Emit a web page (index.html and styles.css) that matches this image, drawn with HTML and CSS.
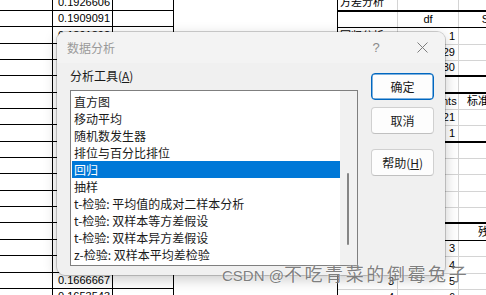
FILE: index.html
```html
<!DOCTYPE html>
<html lang="zh-CN">
<head>
<meta charset="utf-8">
<title>数据分析</title>
<link rel="stylesheet" href="styles.css">
</head>
<body>
<div class="screen">
  <div class="sheet">
    <div class="ltable">
      <div class="row"><div class="cell"></div><div class="cell num">0.1926606</div><div class="cell"></div></div>
      <div class="row"><div class="cell"></div><div class="cell num">0.1909091</div><div class="cell"></div></div>
      <div class="row"><div class="cell"></div><div class="cell num">0.1891892</div><div class="cell"></div></div>
      <div class="row"><div class="cell"></div><div class="cell num">0.1875</div><div class="cell"></div></div>
      <div class="row"><div class="cell"></div><div class="cell num">0.1858407</div><div class="cell"></div></div>
      <div class="row"><div class="cell"></div><div class="cell num">0.1842105</div><div class="cell"></div></div>
      <div class="row"><div class="cell"></div><div class="cell num">0.1826087</div><div class="cell"></div></div>
      <div class="row"><div class="cell"></div><div class="cell num">0.1810345</div><div class="cell"></div></div>
      <div class="row"><div class="cell"></div><div class="cell num">0.1794872</div><div class="cell"></div></div>
      <div class="row"><div class="cell"></div><div class="cell num">0.1779661</div><div class="cell"></div></div>
      <div class="row"><div class="cell"></div><div class="cell num">0.1764706</div><div class="cell"></div></div>
      <div class="row"><div class="cell"></div><div class="cell num">0.175</div><div class="cell"></div></div>
      <div class="row"><div class="cell"></div><div class="cell num">0.1735537</div><div class="cell"></div></div>
      <div class="row"><div class="cell"></div><div class="cell num">0.1721311</div><div class="cell"></div></div>
      <div class="row"><div class="cell"></div><div class="cell num">0.1707317</div><div class="cell"></div></div>
      <div class="row"><div class="cell"></div><div class="cell num">0.1693548</div><div class="cell"></div></div>
      <div class="row"><div class="cell"></div><div class="cell num">0.168</div><div class="cell"></div></div>
      <div class="row"><div class="cell"></div><div class="cell num">0.1666667</div><div class="cell"></div></div>
      <div class="row"><div class="cell"></div><div class="cell num">0.1653543</div><div class="cell"></div></div>
    </div>

    <div class="rtable">
      <div class="row b2"><div class="cell txt">方差分析</div><div class="cell"></div><div class="cell"></div></div>
      <div class="row b1"><div class="cell"></div><div class="cell ctr">df</div><div class="cell ctr">SS</div></div>
      <div class="row"><div class="cell txt">回归分析</div><div class="cell num">1</div><div class="cell"></div></div>
      <div class="row"><div class="cell txt">残差</div><div class="cell num">29</div><div class="cell"></div></div>
      <div class="row b2"><div class="cell txt">总计</div><div class="cell num">30</div><div class="cell"></div></div>
      <div class="row b2"><div class="cell"></div><div class="cell"></div><div class="cell"></div></div>
      <div class="row"><div class="cell"></div><div class="cell ctr">Coefficients</div><div class="cell ctr">标准误差</div></div>
      <div class="row"><div class="cell txt">Intercept</div><div class="cell num">0.2034521</div><div class="cell"></div></div>
      <div class="row b2"><div class="cell txt">X Variable 1</div><div class="cell num">1</div><div class="cell"></div></div>
      <div class="row"><div class="cell"></div><div class="cell"></div><div class="cell"></div></div>
      <div class="row"><div class="cell"></div><div class="cell"></div><div class="cell"></div></div>
      <div class="row"><div class="cell"></div><div class="cell"></div><div class="cell"></div></div>
      <div class="row"><div class="cell"></div><div class="cell"></div><div class="cell"></div></div>
      <div class="row b2"><div class="cell"></div><div class="cell"></div><div class="cell"></div></div>
      <div class="row b1"><div class="cell ctr">观测值</div><div class="cell ctr">预测 Y</div><div class="cell ctr">残差</div></div>
      <div class="row"><div class="cell num">1</div><div class="cell num">3</div><div class="cell"></div></div>
      <div class="row"><div class="cell num">2</div><div class="cell num">4</div><div class="cell"></div></div>
      <div class="row"><div class="cell num">3</div><div class="cell num">5</div><div class="cell"></div></div>
      <div class="row"><div class="cell num">4</div><div class="cell num">6</div><div class="cell"></div></div>
    </div>
  </div>

  <div class="dialog">
    <div class="titlebar">
      <span class="title">数据分析</span>
      <span class="tb-btn help">?</span>
      <span class="tb-btn close">
        <svg width="11" height="11" viewBox="0 0 11 11"><path d="M0.5 0.5 L10.5 10.5 M10.5 0.5 L0.5 10.5" stroke="#7d7d7d" stroke-width="1" fill="none"/></svg>
      </span>
    </div>
    <div class="body">
      <div class="left">
        <div class="label">分析工具(<u>A</u>)</div>
        <div class="listbox">
          <ul class="items">
            <li>直方图</li>
            <li>移动平均</li>
            <li>随机数发生器</li>
            <li>排位与百分比排位</li>
            <li class="selected">回归</li>
            <li>抽样</li>
            <li>t-检验: 平均值的成对二样本分析</li>
            <li>t-检验: 双样本等方差假设</li>
            <li>t-检验: 双样本异方差假设</li>
            <li>z-检验: 双样本平均差检验</li>
          </ul>
          <div class="scrollbar"><div class="thumb"></div></div>
        </div>
      </div>
      <div class="buttons">
        <button class="btn default">确定</button>
        <button class="btn">取消</button>
        <button class="btn help-btn">帮助(<u>H</u>)</button>
      </div>
    </div>
  </div>

  <div class="watermark"><span class="wm-lat">CSDN @</span><span class="wm-cjk">不吃青菜的倒霉兔子</span></div>
</div>
</body>
</html>
```

FILE: styles.css
```css
* { box-sizing: border-box; margin: 0; padding: 0; }

html, body {
  width: 486px;
  height: 295px;
  overflow: hidden;
  background: #fff;
}

body {
  font-family: "Liberation Sans", Arial, "Noto Sans CJK SC", sans-serif;
  color: #000;
}

.screen {
  position: relative;
  width: 486px;
  height: 295px;
  overflow: hidden;
}

/* ---------- spreadsheet background ---------- */
.sheet {
  display: flex;
  align-items: flex-start;
}

.row {
  display: grid;
  height: 16.35px;
  border-bottom: 1px solid #000;
}

.cell {
  display: flex;
  align-items: flex-end;
  font-size: 11px;
  line-height: 12px;
  white-space: nowrap;
  overflow: hidden;
  padding: 0 2px 2px;
}

.cell.num { justify-content: flex-end; padding-right: 3px; }
.cell.ctr { justify-content: center; }
.cell.txt { justify-content: flex-start; }

.ltable {
  width: 174px;
  margin-top: -5.35px;
}

.ltable .row { grid-template-columns: 53px 60px 61px; }
.ltable .cell { border-right: 1px solid #000; }
.ltable .cell.num { padding-right: 2px; }

.rtable {
  flex: 1;
  margin-left: 163px;
  margin-top: -4.35px;
  border-left: 1px solid #000;
}

.rtable .row {
  grid-template-columns: 60px 61px 61px;
  border-bottom-color: #d4d4d4;
}
.rtable .row.b1 { border-bottom: 1px solid #000; }
.rtable .row.b2 { border-bottom: 2px solid #000; }
.rtable .cell { border-right: 1px solid #d4d4d4; }
.rtable .cell.txt, .rtable .cell.ctr { font-family: "Liberation Sans", "Noto Sans CJK SC", sans-serif; }

/* ---------- dialog ---------- */
.dialog {
  position: absolute;
  left: 57px;
  top: 32px;
  width: 388px;
  height: 243px;
  background: #f0f0f0;
  border-radius: 8px;
  box-shadow: 0 0 0 1px rgba(0, 0, 0, 0.18), 0 4px 14px rgba(0, 0, 0, 0.22);
  font-family: "Noto Sans CJK SC", sans-serif;
  font-size: 12px;
  color: #1a1a1a;
}

.titlebar {
  display: flex;
  align-items: center;
  height: 31px;
  padding-left: 10px;
  background: #f3f3f3;
  border-radius: 8px 8px 0 0;
}

.title {
  flex: 1;
  color: #9a9a9a;
  line-height: 31px;
}

.tb-btn {
  width: 46px;
  height: 31px;
  display: flex;
  align-items: center;
  justify-content: center;
  color: #8a8a8a;
}

.help {
  font-family: "Liberation Sans", sans-serif;
  font-size: 13px;
}

.body {
  display: flex;
  gap: 13px;
  padding: 5px 11px 0 13px;
}

.left {
  width: 289px;
  display: flex;
  flex-direction: column;
}

.label {
  line-height: 16px;
  margin-bottom: 6px;
}

.listbox {
  height: 176px;
  border: 1px solid #7f7f7f;
  background: #fff;
  display: flex;
}

.items {
  flex: 1;
  list-style: none;
  padding: 2px 0 0 1px;
  overflow: hidden;
}

.items li {
  height: 17px;
  line-height: 17px;
  padding-left: 2px;
  white-space: nowrap;
  overflow: hidden;
}

.items li.selected {
  background: #0078d7;
  color: #fff;
}

.scrollbar {
  width: 17px;
  background: #f1f1f1;
  padding-top: 82px;
}

.thumb {
  width: 2px;
  height: 72px;
  margin-left: 7px;
  background: #858585;
  border-radius: 1px;
}

.buttons {
  width: 63px;
  display: flex;
  flex-direction: column;
  padding-top: 5px;
}

.btn {
  height: 27px;
  border: 1px solid #d0d0d0;
  border-bottom-color: #c0c0c0;
  border-radius: 4px;
  background: #fdfdfd;
  font-family: "Noto Sans CJK SC", sans-serif;
  font-size: 12px;
  color: #1a1a1a;
  line-height: 25px;
  margin-bottom: 7px;
}

.btn.default {
  border: 1px solid #0067c0;
  box-shadow: inset 0 0 0 0.5px #0067c0;
}

.btn.help-btn {
  margin-top: 8px;
}

/* ---------- watermark ---------- */
.watermark {
  position: absolute;
  left: 222px;
  top: 262px;
  white-space: nowrap;
  color: rgba(105, 105, 105, 0.85);
  text-shadow: 0 0 2px rgba(255, 255, 255, 0.95);
  line-height: 22px;
}

.wm-lat {
  font-family: "Liberation Sans", sans-serif;
  font-size: 15px;
}

.wm-cjk {
  font-family: "Noto Sans CJK SC", sans-serif;
  font-size: 18px;
  letter-spacing: 2.6px;
}
```
